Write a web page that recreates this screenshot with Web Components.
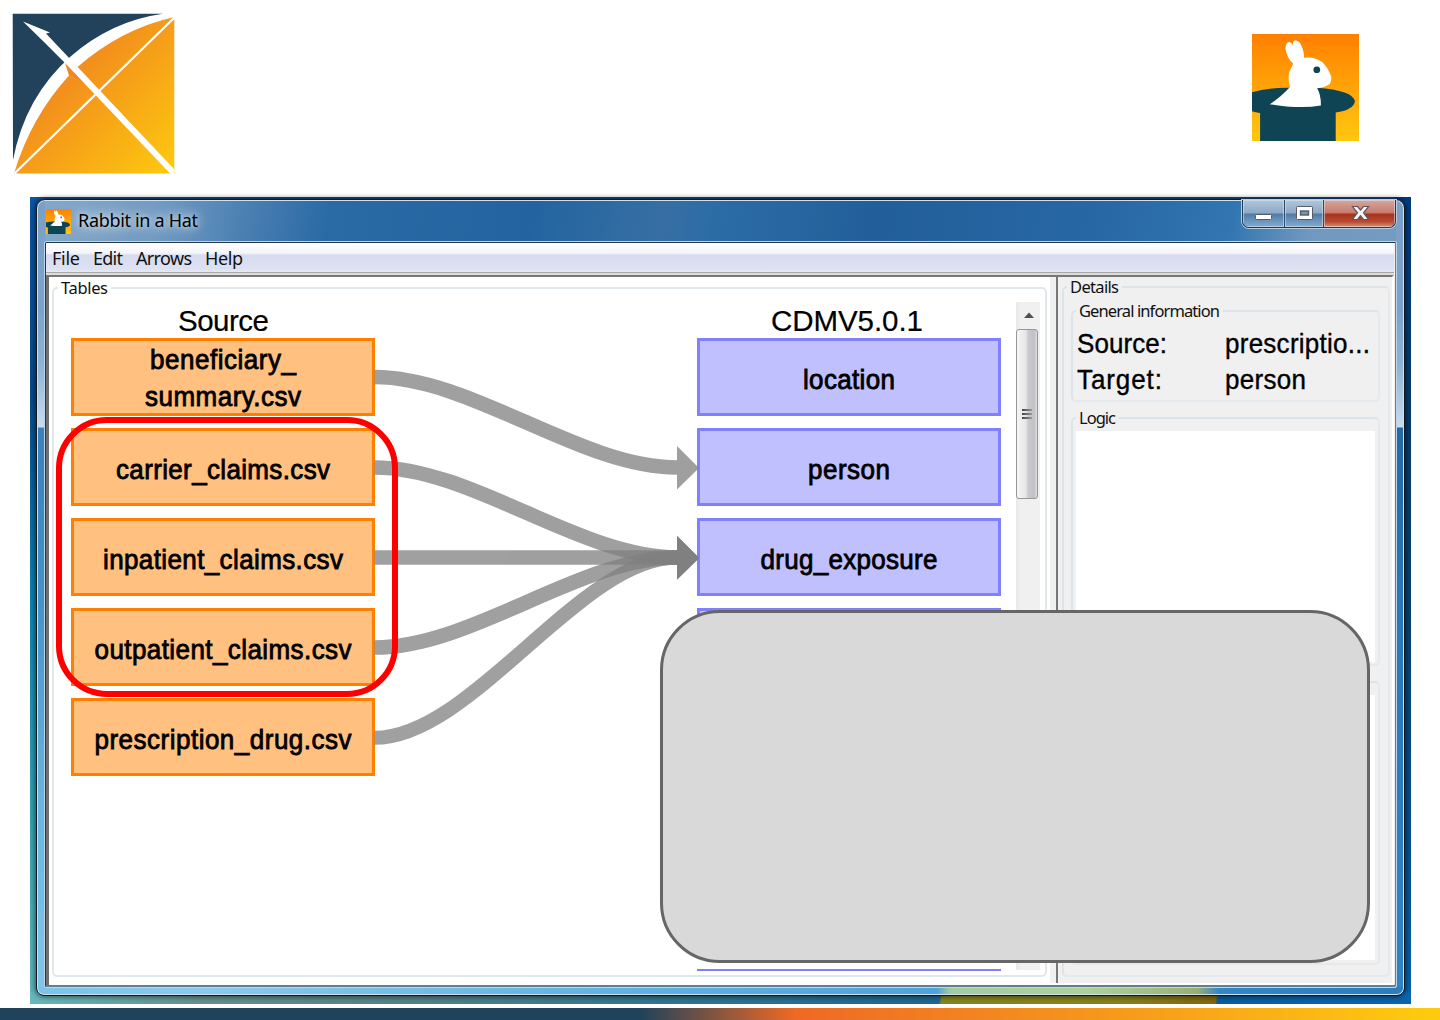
<!DOCTYPE html>
<html lang="en">
<head>
<meta charset="utf-8">
<title>Rabbit in a Hat</title>
<style>
html,body{margin:0;padding:0;background:#fff}
body{width:1440px;height:1020px;overflow:hidden;font-family:"Liberation Sans",Arial,sans-serif;color:#000}
</style>
</head>
<body>
<slide-page>
  <ohdsi-logo slot="header"></ohdsi-logo>
  <rabbit-icon slot="header" size="107"></rabbit-icon>
  <desktop-area>
    <app-window label="Rabbit in a Hat">
      <menu-bar slot="menu" items="File:28,Edit:30,Arrows:56,Help:38"></menu-bar>
      <mapping-panel></mapping-panel>
      <details-panel></details-panel>
    </app-window>
  </desktop-area>
  <red-outline slot="overlay"></red-outline>
  <grey-callout slot="overlay"></grey-callout>
</slide-page>
<script>
const define = (name, html, after) => customElements.define(name, class extends HTMLElement {
  connectedCallback() {
    if (this.shadowRoot) return;
    const root = this.attachShadow({ mode: "open" });
    root.innerHTML = typeof html === "function" ? html(this) : html;
    if (after) after(this, root);
  }
});

/* Text set to a given width by letter spacing */
define("fit-text", `<style>:host{display:inline-block;white-space:nowrap}span{display:inline-block}</style><span></span>`, (el, root) => {
  const s = root.querySelector("span");
  s.textContent = el.getAttribute("text");
  const w = +el.getAttribute("w");
  const n = s.textContent.length;
  const nat = s.offsetWidth ? s.getBoundingClientRect().width : 0;
  if (w && nat) s.style.letterSpacing = ((w - nat) / (n - 1)) + "px";
  el.style.width = w + "px";
});

define("ohdsi-logo", `<style>:host{display:block;width:190px;height:190px}svg{display:block}</style>
<svg width="190" height="190" viewBox="0 0 190 190">
<defs><linearGradient id="g" x1="60" y1="60" x2="172" y2="172" gradientUnits="userSpaceOnUse"><stop offset="0" stop-color="#f1861e"/><stop offset="1" stop-color="#fdc90f"/></linearGradient></defs>
<path d="M12.7 13.8H163Q111 21 70 57Q25 97 13 160Z" fill="#21425a"/>
<path d="M174.3 17Q121 29 77.5 67L97 89L69 75.5Q31 117 14 173.5H174.3Z" fill="url(#g)"/>
<path d="M65 63L97 90L69 75.5Z" fill="#f1861e"/>
<path d="M14.5 173.500L174.500 17.500" stroke="#fff" stroke-width="2.200"/>
<path d="M23 21.500L50 32.500L46 33.500L174 169V175H171.500L65.500 63.500L44 42Z" fill="#fff"/>
</svg>`);

define("rabbit-icon", el => { const s = el.getAttribute("size"); return `<style>:host{display:block;width:${s}px;height:${s}px;flex:none}svg{display:block}</style>
<svg width="${s}" height="${s}" viewBox="38 42 317 320" preserveAspectRatio="none">
<defs><linearGradient id="g" x1="0" y1="0" x2="0" y2="1"><stop offset="0" stop-color="#ff8000"/><stop offset="1" stop-color="#ffc710"/></linearGradient></defs>
<rect x="38" y="42" width="317" height="320" fill="url(#g)"/>
<path d="M38 216Q80 203 142 203H230Q338 211 343 244Q337 270 286 277V362H62V278Q48 276 38 273Z" fill="#0e4454"/>
<path d="M91 252Q128 227 151 200Q144 182 148 156Q155 142 160 130Q142 116 137 85Q139 65 149 66Q156 69 159 76Q158 61 168 61Q182 65 188 86Q193 101 192 113Q223 108 246 126Q265 145 273 171Q273 190 264 194Q253 202 231 204Q243 225 242 256Q180 267 91 252Z" fill="#fff"/>
<circle cx="230" cy="149" r="10" fill="#0e4454"/>
</svg>`; });

define("slide-page", `<style>
:host{display:flex;flex-direction:column;width:1440px;height:1020px;position:relative;overflow:hidden}
header{height:197px;display:flex;justify-content:space-between;padding-right:81px;box-sizing:border-box;flex:none}
header ::slotted(rabbit-icon){margin-top:34px}
main{height:811px;padding-left:30px;box-sizing:border-box;flex:none}
footer{height:12px;background:linear-gradient(90deg,#20425b 0,#20425b 640px,#ee6924 795px,#f5941d 1080px,#fdca10 1425px)}
</style><header><slot name="header"></slot></header><main><slot></slot></main><footer></footer><slot name="overlay"></slot>`);

define("desktop-area", `<style>
:host{display:block;box-sizing:border-box;width:1381px;height:807px;padding:2px 6px 8px;
background:
linear-gradient(100deg,#65b8bd 0,#668e8e 170px,#538185 380px,#32758b 620px,#1f6791 897px,#858520 899px,#84821d 1070px,#80670e 1169px,#0a5c9f 1171px,#0a66b0 1360px) 0 100%/1381px 12px no-repeat,
linear-gradient(#0b55a2,#084a8a 25%,#0b83ad 50%,#2fa0b0 75%,#62b4ba) 0 0/16px 100% no-repeat,
linear-gradient(#003c80,#063a6c 25%,#07406f 50%,#07508e 80%,#0a62a9) 100% 0/16px 100% no-repeat,
#16497e}
</style><slot></slot>`);

define("app-window", el => `<style>
:host{display:flex;flex-direction:column;box-sizing:border-box;width:1369px;height:797px;border:1px solid #101820;border-radius:9px 9px 8px 8px;
box-shadow:inset 0 0 0 1px #cfe0ef,0 0 5px 1px #0008;padding:0 7px 7px;
background:
linear-gradient(90deg,#7cc3e8,#8cc8f0 170px,#78bde3 350px,#61b0e0 600px,#50a3d8 900px,#a4cba0 913px,#aed199 1050px,#9caf72 1160px,#3586c4 1182px,#2d7cbe) 0 100%/100% 8px no-repeat,
linear-gradient(#7aa0c8,#7aa3cc 110px,#8db3d6 165px,#c9dcec 227px,#3a80bd 228px,#4293c8 400px,#66b5e0 600px,#80c6ea) 0 0/8px 100% no-repeat,
linear-gradient(#7d9fc4,#7aa3cc 110px,#8fb3d3 165px,#c9dcec 227px,#2369a6 228px,#2978b8 400px,#3084c6) 100% 0/8px 100% no-repeat,
linear-gradient(100deg,#86a9c9 0,#719bc3 120px,#4a7fb2 210px,#2a6aa5 290px,#2364a0 490px,#376fa3 620px,#2c6ca6 670px,#225f9a 830px,#2767a4 1040px,#3275b0 1180px,#7199c0 1260px,#7b9fc5)}
.bar{height:41px;flex:none;display:flex;box-sizing:border-box;padding-left:2px}
rabbit-icon{margin:9px 7px 0 0}
.t{font:18px/24px "Noto Sans",sans-serif;margin-top:8px;margin-right:auto;text-shadow:0 0 8px #fff8,0 0 14px #fff9,0 0 20px #fff8,0 0 4px #fff6}
.btns{display:flex;height:28px;box-sizing:border-box;border:1px solid #213a55;border-top:0;border-radius:0 0 7px 7px;margin-right:1px;overflow:hidden;box-shadow:0 0 0 1px #b9cde0;width:154px}
.btns i{display:flex;align-items:center;justify-content:center;box-sizing:border-box;width:42px;background:linear-gradient(#b2c6da,#8ca9c6 48%,#507ba5 52%,#85abd0);border-right:1px solid #2c4866;box-shadow:inset 0 0 0 1px #dfe9f388}
.btns i:nth-child(2){width:40px}
.btns i:last-child{width:71px;border:0;background:linear-gradient(#d5a79e,#c57b6c 48%,#a9311c 52%,#b64b31 80%,#d99173)}
.btns svg{margin-top:-2px}
.client{flex:1;min-height:0;display:flex;flex-direction:column;border:1px solid #bed4e8;border-radius:2px;box-shadow:inset 1px 1px 0 #24384c,inset -1px -2px 0 #5f7f95;padding:1px 2px 2px 1px;background:#f0f0f0}
.row{flex:1;display:flex;min-height:0;border-top:1px solid #a8a8a8;padding-top:2px;background:#dcdcd8}
</style>
<div class="bar"><rabbit-icon size="25"></rabbit-icon><fit-text class="t" text="${el.getAttribute("label")}" w="120"></fit-text>
<div class="btns">
<i><svg width="20" height="20"><rect x="2.500" y="11.500" width="16" height="5" rx="1" fill="#fff" stroke="#565d69"/></svg></i>
<i><svg width="20" height="20"><rect x="2.500" y="3.500" width="16" height="13" rx="1" fill="#fff" stroke="#565d69"/><rect x="6.500" y="8" width="8" height="4" fill="#7795b5" stroke="#565d69" stroke-width="1.400"/></svg></i>
<i><svg width="20" height="20"><path d="M2.500 3.500H7.500L10.500 7L13.500 3.500H18.500L13.500 9.800L18.500 16.500H13.500L10.500 12.800L7.500 16.500H2.500L7.500 9.800Z" fill="#f4f4f4" stroke="#5b5660" stroke-width="1.200"/></svg></i>
</div></div>
<div class="client"><slot name="menu"></slot><div class="row"><slot></slot></div></div>`);

define("menu-bar", el => `<style>
:host{display:flex;align-items:center;gap:13px;height:29px;flex:none;padding-left:6px;box-sizing:border-box;
background:linear-gradient(#fff,#f3f5fb 35%,#d6dbed 42%,#dde2f3 90%,#e6e9f5);font:18px/24px "Noto Sans",sans-serif;color:#111}
fit-text{flex:none}
</style>` + el.getAttribute("items").split(",").map(s => { const [t, w] = s.split(":"); return `<fit-text text="${t}" w="${w}"></fit-text>`; }).join(""));

define("group-box", el => `<style>
:host{display:block;box-sizing:border-box}
fieldset{box-sizing:border-box;width:100%;height:100%;min-width:0;margin:0;border:2px solid #e1e8ec;border-radius:5px;padding:0}
:host([raised]) fieldset{border-color:#dce4e9 #e3e9ed #e3e9ed #dce4e9}
legend{font:16.500px/20px "Noto Sans",sans-serif;margin-left:4px;padding:0 3px;height:20px;color:#111}
:host([raised]) legend{margin-left:3px}
</style><fieldset><legend>${el.getAttribute("label") ? `<fit-text text="${el.getAttribute("label")}" w="${el.getAttribute("w")}"></fit-text>` : ""}</legend><slot></slot></fieldset>`);

define("table-node", el => `<style>
:host{position:absolute;display:flex;flex-direction:column;align-items:center;justify-content:center;box-sizing:border-box;width:304px;height:78px;
border:3px solid var(--line);background:var(--fill);font-size:26px;line-height:37.500px;-webkit-text-stroke:.8px #000;padding-top:${(el.getAttribute("lines") || "").includes(",") ? 4 : 8}px}
:host([kind=source]){--line:#ff8000;--fill:#ffc080}
:host([kind=target]){--line:#8080ff;--fill:#c0c0ff}
fit-text{transform:scaleY(1.05)}
</style>` + (el.getAttribute("lines") || "").split(",").filter(Boolean).map(s => { const [t, w] = s.split(":"); return `<fit-text text="${t}" w="${w}"></fit-text>`; }).join(""));

define("scroll-bar", `<style>
:host{position:absolute;display:flex;flex-direction:column;align-items:center;width:24px;background:linear-gradient(90deg,#e8e8e8,#f0f0f0 20%,#f0f0f0)}
svg{display:block;margin:9px 0 0 1px}
.thumb{margin:10px 2px 0 0;width:22px;height:170px;box-sizing:border-box;border:1.500px solid #979797;border-radius:3px;background:linear-gradient(90deg,#f6f6f6,#e6e6e8 45%,#cbcbcf 55%,#c0c0c5 85%,#dcdcdc);display:flex;flex-direction:column;gap:2px;align-items:center;justify-content:center}
.thumb i{width:10px;height:2px;background:linear-gradient(90deg,#444,#999)}
</style><svg width="12" height="8"><path d="M1 7L6 1.500L11 7Z" fill="#505050"/></svg><div class="thumb"><i></i><i></i><i></i></div>`);

/* Free canvas: child coordinates are relative to (48,277) */
define("mapping-panel", () => {
  const X = 48, Y = 277;
  const src = ["beneficiary_:146,summary.csv:156", "carrier_claims.csv:214", "inpatient_claims.csv:240", "outpatient_claims.csv:257", "prescription_drug.csv:257"];
  const tgt = ["location:92", "person:82", "drug_exposure:177", ""];
  const arrow = (y1, y2, w) => `<g opacity=".75" fill="#808080"><path d="M374.500 ${y1}C472 ${y1} 580 ${y2} 677 ${y2}" fill="none" stroke="#808080" stroke-width="${w}"/><path d="M677 ${y2 - 21.5}L699 ${y2 + .5}L677 ${y2 + 22}Z"/></g>`;
  return `<style>
:host{display:block;position:relative;box-sizing:border-box;width:1004px;height:100%;background:#fff;border-left:3px solid #707070;border-top:2px solid #777;overflow:hidden;flex:none}
group-box{position:absolute;left:3px;top:1px;width:995px;height:699px}
.canvas{position:absolute;left:-1px;top:0;width:1000px;height:694px;overflow:hidden}
.canvas>svg{position:absolute;left:0;top:0}
.h{position:absolute;font-size:29.500px;line-height:34px;-webkit-text-stroke:.2px #000}
</style><group-box label="Tables" w="47"></group-box>
<div class="canvas">
<fit-text class="h" style="left:${178-X}px;top:${304-Y}px" text="Source" w="91"></fit-text>
<fit-text class="h" style="left:${771-X}px;top:${304-Y}px" text="CDMV5.0.1" w="152"></fit-text>
${src.map((l, i) => `<table-node kind="source" lines="${l}" style="left:${71-X}px;top:${338-Y+i*90}px"></table-node>`).join("")}
${tgt.map((l, i) => `<table-node kind="target" lines="${l}" style="left:${697-X}px;top:${338-Y+i*90}px"></table-node>`).join("")}
<table-node kind="target" style="left:${697-X}px;top:${968.500-Y}px"></table-node>
<svg width="700" height="600" viewBox="${X} ${Y} 700 600">${arrow(377,467.5,14.7)}${arrow(467.5,557.5,14.7)}${arrow(557.5,557.5,14.7)}${arrow(647.5,557.5,14.7)}${arrow(737.8,557.5,14)}</svg>
<scroll-bar style="left:${1016-X}px;top:${302-Y}px;height:668px"></scroll-bar>
</div>`;
});

define("details-panel", `<style>
:host{display:flex;flex:1;min-width:0;margin-left:0;border-top:2px solid #777;background:linear-gradient(90deg,#f0f0f0 6px,#777 6px,#777 8px,#f0f0f0 8px);box-sizing:border-box;padding:0 3px 5px 12px;border-right:2px solid #fff;border-bottom:2px solid #fff}
.outer{width:328px;height:700px;flex:none}
.col{display:flex;flex-direction:column;gap:6px;padding:4px 8px 0 7px}
.gen{height:101px}.log{height:258px}.com{height:293px}
dl{margin:5px 0 0 4px;display:grid;grid-template-columns:148px 1fr;row-gap:0;font-size:26px;line-height:36px;-webkit-text-stroke:.35px #000}
dl fit-text{transform:scaleY(1.05)}
dt,dd{margin:0}
.area{margin:3px 3px 0;height:231px;background:#fff}
.com .area{height:265px}
</style>
<group-box class="outer" raised label="Details" w="49"><div class="col">
<group-box class="gen" raised label="General information" w="141"><dl><dt><fit-text text="Source:" w="90"></fit-text></dt><dd><fit-text text="prescriptio..." w="145"></fit-text></dd><dt><fit-text text="Target:" w="85"></fit-text></dt><dd><fit-text text="person" w="81"></fit-text></dd></dl></group-box>
<group-box class="log" raised label="Logic" w="37"><div class="area"></div></group-box>
<group-box class="com" raised><div class="area"></div></group-box>
</div></group-box>`);

define("red-outline", `<style>:host{position:absolute;box-sizing:border-box;left:56px;top:417px;width:342px;height:280px;border:6px solid #f00;border-radius:51px}</style>`);
define("grey-callout", `<style>:host{position:absolute;box-sizing:border-box;left:660px;top:610px;width:710px;height:353px;border:3px solid #666;border-radius:60px;background:#d9d9d9}</style>`);
</script>
</body>
</html>
